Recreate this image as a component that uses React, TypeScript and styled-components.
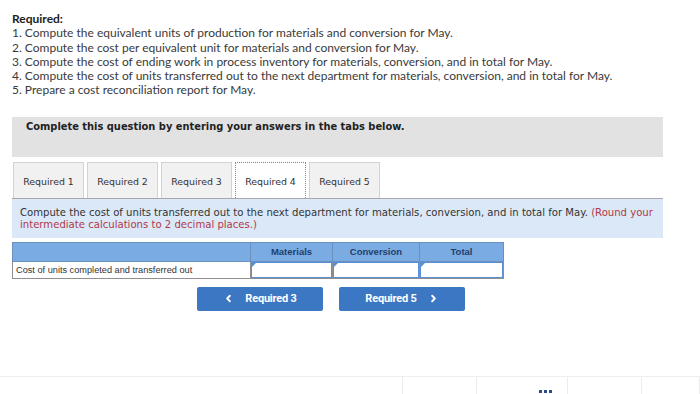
import { FC } from 'react';
import styled, { createGlobalStyle } from 'styled-components';
import { ChevronLeft, ChevronRight } from 'lucide-react';

const steps = [
  '1. Compute the equivalent units of production for materials and conversion for May.',
  '2. Compute the cost per equivalent unit for materials and conversion for May.',
  '3. Compute the cost of ending work in process inventory for materials, conversion, and in total for May.',
  '4. Compute the cost of units transferred out to the next department for materials, conversion, and in total for May.',
  '5. Prepare a cost reconciliation report for May.',
];

const tabs = ['Required 1', 'Required 2', 'Required 3', 'Required 4', 'Required 5'];
const columns = ['Materials', 'Conversion', 'Total'];
const footerCells = [403, 74, 91, 74, 58];

const App: FC = () => {
  return (
    <>
      <GlobalStyle />
      <Page>
        <Instructions>
          <Title>Required:</Title>
          {steps.map((s) => (
            <Step key={s}>{s}</Step>
          ))}
        </Instructions>

        <Banner>Complete this question by entering your answers in the tabs below.</Banner>

        <TabRow>
          {tabs.map((t) => (
            <Tab key={t} $active={t === 'Required 4'}>
              {t}
            </Tab>
          ))}
        </TabRow>

        <Panel>
          Compute the cost of units transferred out to the next department for materials, conversion, and in total
          for May. <Note>(Round your intermediate calculations to 2 decimal places.)</Note>
        </Panel>

        <Table>
          <colgroup>
            <col style={{ width: 238 }} />
            <col style={{ width: 82 }} />
            <col style={{ width: 87 }} />
            <col style={{ width: 84 }} />
          </colgroup>
          <thead>
            <tr>
              <HeadCell />
              {columns.map((c) => (
                <HeadCell key={c}>{c}</HeadCell>
              ))}
            </tr>
          </thead>
          <tbody>
            <tr>
              <LabelCell>Cost of units completed and transferred out</LabelCell>
              {columns.map((c) => (
                <InputCell key={c}>
                  <Field />
                </InputCell>
              ))}
            </tr>
          </tbody>
        </Table>

        <NavRow>
          <NavButton>
            <ChevronLeft size={11} strokeWidth={4} />
            Required 3
          </NavButton>
          <NavButton>
            Required 5
            <ChevronRight size={11} strokeWidth={4} />
          </NavButton>
        </NavRow>
      </Page>

      <Footer>
        {footerCells.map((w, i) => (
          <FooterCell key={i} style={{ width: w }}>
            {i === 2 && (
              <Dots>
                <Dot />
                <Dot />
                <Dot />
              </Dots>
            )}
          </FooterCell>
        ))}
      </Footer>
    </>
  );
};

export default App;

const GlobalStyle = createGlobalStyle`
  body {
    margin: 0;
    background: #fff;
  }
`;

const Page = styled.div`
  width: 651px;
  margin-left: 12px;
`;

const Instructions = styled.div`
  padding-top: 12px;
  font-family: Lato, 'Liberation Sans', sans-serif;
  font-size: 12px;
  line-height: 14.3px;
  color: #3a3a3a;
`;

const Title = styled.div`
  font-weight: bold;
  color: #222;
`;

const Step = styled.div``;

const Banner = styled.div`
  margin-top: 19px;
  height: 40px;
  box-sizing: border-box;
  padding: 4px 14px 0;
  background: #e2e2e2;
  font-family: 'DejaVu Sans', Verdana, sans-serif;
  font-size: 9.9px;
  font-weight: bold;
  line-height: 12px;
  color: #222;
`;

const TabRow = styled.div`
  display: flex;
  gap: 3px;
  margin-top: 5px;
  padding-left: 1px;
`;

const Tab = styled.div<{ $active?: boolean }>`
  width: 71px;
  height: 36px;
  box-sizing: border-box;
  display: flex;
  align-items: center;
  justify-content: center;
  padding-top: 2px;
  font-family: 'DejaVu Sans', Verdana, sans-serif;
  font-size: 9.4px;
  color: #333;
  background: ${(p) => (p.$active ? '#fff' : '#f1f1f1')};
  border: 1px ${(p) => (p.$active ? 'dotted #888' : 'solid #d3d3d3')};
  border-bottom: none;
  margin-bottom: ${(p) => (p.$active ? '-1px' : '0')};
  position: relative;
  z-index: ${(p) => (p.$active ? 1 : 0)};
`;

const Panel = styled.div`
  height: 40px;
  box-sizing: border-box;
  padding: 8px 8px 0;
  background: #dbe8f7;
  border-top: 1px solid #a8a8a8;
  font-family: 'DejaVu Sans', Verdana, sans-serif;
  font-size: 10.1px;
  line-height: 12px;
  color: #333;
`;

const Note = styled.span`
  color: #b0394a;
`;

const Table = styled.table`
  margin-top: 4px;
  border-collapse: collapse;
  table-layout: fixed;
  width: 491px;
  font-family: 'Liberation Sans', Arial, sans-serif;
`;

const HeadCell = styled.th`
  height: 18px;
  padding: 0;
  background: #7aabe2;
  border: 1px solid #6a90c0;
  font-size: 9.5px;
  font-weight: bold;
  color: #223f6c;
  text-align: center;
`;

const LabelCell = styled.td`
  height: 16px;
  padding: 0 3px;
  border: 1px solid #8f8f8f;
  font-size: 9.2px;
  color: #333;
`;

const InputCell = styled.td`
  height: 16px;
  padding: 0;
  border: 1px solid #8f8f8f;
`;

const Field = styled.div`
  height: 16px;
  box-sizing: border-box;
  border: 1px solid #5b8fd4;
  background: #fff;
  position: relative;

  &::before {
    content: '';
    position: absolute;
    top: 0;
    left: 0;
    border-top: 4px solid #5b8fd4;
    border-right: 4px solid transparent;
  }
`;

const NavRow = styled.div`
  display: flex;
  gap: 16px;
  margin-top: 8px;
  margin-left: 185px;
`;

const NavButton = styled.button`
  width: 126px;
  height: 24px;
  display: flex;
  align-items: center;
  justify-content: center;
  gap: 11px;
  border: none;
  border-radius: 2px;
  background: #3b77c2;
  color: #fff;
  font-family: Roboto, 'Liberation Sans', sans-serif;
  font-size: 11px;
  font-weight: bold;
  letter-spacing: -0.2px;
  cursor: pointer;
`;

const Footer = styled.div`
  display: flex;
  margin-top: 65px;
  height: 17px;
  border-top: 1px solid #eeeeee;
  overflow: hidden;
`;

const FooterCell = styled.div`
  box-sizing: border-box;
  border-right: 1px solid #ececec;
  display: flex;
  justify-content: flex-end;
  align-items: flex-end;
  padding: 0 15px 1px 0;
`;

const Dots = styled.div`
  display: flex;
  gap: 2px;
`;

const Dot = styled.span`
  width: 3px;
  height: 3px;
  background: #2c4a8c;
`;
